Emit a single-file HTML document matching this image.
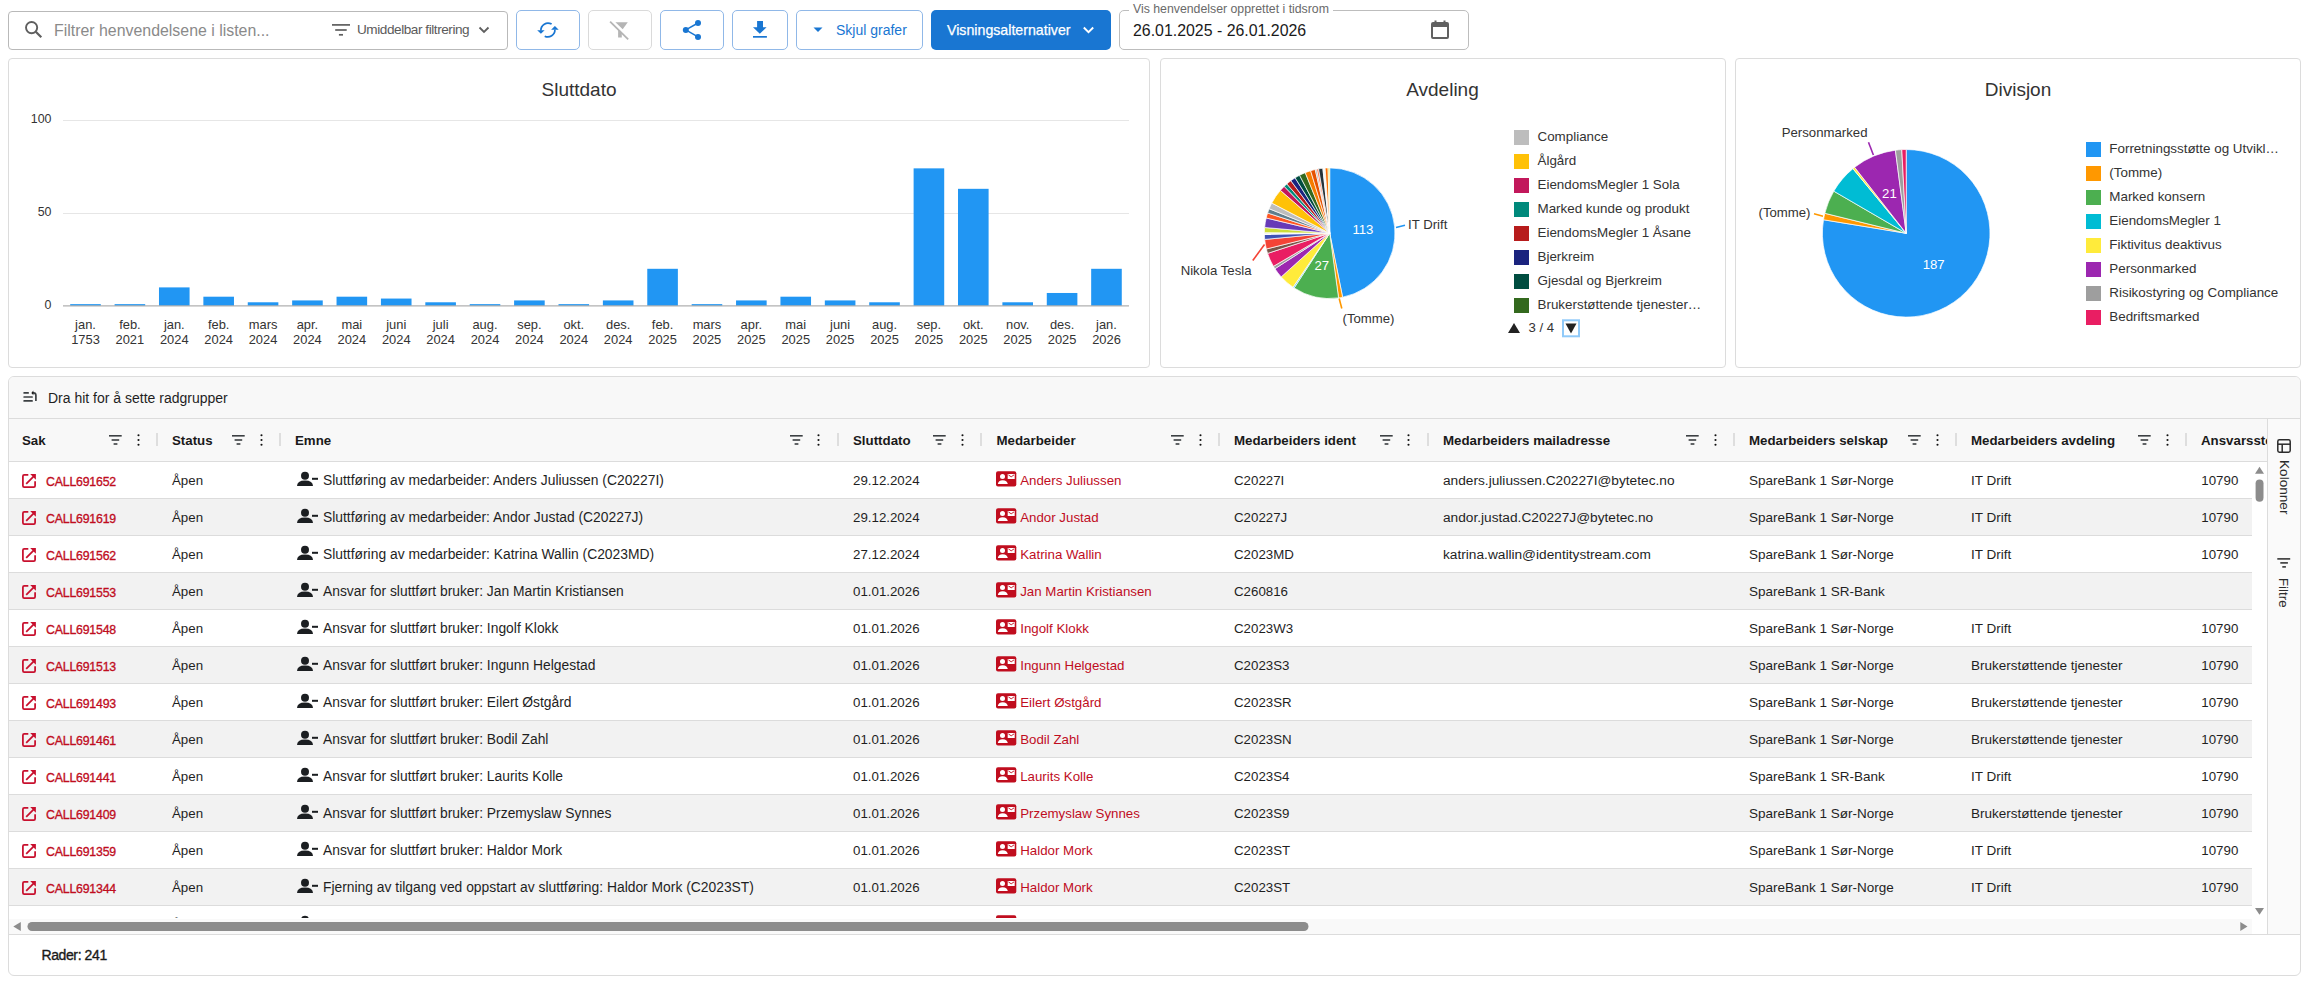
<!DOCTYPE html>
<html><head><meta charset="utf-8">
<style>
*{box-sizing:border-box;margin:0;padding:0}
html,body{width:2308px;height:982px;overflow:hidden;background:#fff;font-family:"Liberation Sans",sans-serif;color:#212121}
.a{position:absolute}
.btn{position:absolute;top:10px;height:40px;border:1px solid #90b8e8;border-radius:5px;background:#fff}
.btn svg{position:absolute}
.card{position:absolute;border:1px solid #dcdcdc;border-radius:4px;background:#fff}
.t{position:absolute;white-space:nowrap}
</style></head><body>

<!-- ============ TOOLBAR ============ -->
<div class="a" style="left:8px;top:11px;width:500px;height:39px;border:1px solid #b9b9b9;border-radius:4px"></div>
<svg class="a" style="left:24px;top:20px" width="20" height="20" viewBox="0 0 20 20"><circle cx="7.6" cy="7.6" r="5.6" fill="none" stroke="#5f5f5f" stroke-width="1.9"/><line x1="11.8" y1="11.8" x2="17.3" y2="17.3" stroke="#5f5f5f" stroke-width="2.2"/></svg>
<div class="t" style="left:54px;top:22px;font-size:15.9px;color:#8a8a8a;line-height:18px">Filtrer henvendelsene i listen...</div>
<svg class="a" style="left:331px;top:23px" width="20" height="14" viewBox="0 0 20 14"><rect x="1" y="1.05" width="18" height="1.7" fill="#5f5f5f"/><rect x="4.2" y="6.15" width="11.5" height="1.7" fill="#5f5f5f"/><rect x="7.9" y="10.95" width="4.1" height="1.7" fill="#5f5f5f"/></svg>
<div class="t" style="left:357px;top:22px;font-size:13.6px;color:#5b5b5b;line-height:16px;letter-spacing:-0.45px">Umiddelbar filtrering</div>
<svg class="a" style="left:478px;top:25px" width="12" height="10" viewBox="0 0 12 10"><polyline points="1.5,2.5 6,7 10.5,2.5" fill="none" stroke="#5f5f5f" stroke-width="1.8"/></svg>

<!-- refresh -->
<div class="btn" style="left:516px;width:64px"></div>
<svg class="a" style="left:530px;top:15px" width="40" height="30" viewBox="0 0 40 30"><g fill="none" stroke="#1976d2" stroke-width="1.75"><path d="M21.6 9.1 A7.1 7.1 0 0 0 10.9 15.6"/><path d="M14.7 21.2 A7.1 7.1 0 0 0 24.9 14.6"/></g><g fill="#1976d2"><path d="M7.2 15.2 L14.6 15.2 L10.9 18.8 Z"/><path d="M21.1 14.8 L28.7 14.8 L24.9 11.1 Z"/></g></svg>
<!-- clear filter (disabled) -->
<div class="btn" style="left:588px;width:64px;border-color:#dadada"></div>
<svg class="a" style="left:605px;top:15px" width="30" height="30" viewBox="0 0 30 30"><g fill="#b5b5b5"><path d="M10.4 7.3 L22.8 7.3 L17.7 14.3 Z"/><path d="M13.1 14.4 L16.8 18.0 L16.8 22.6 L13.1 22.6 Z"/></g><line x1="5.1" y1="6.7" x2="23.2" y2="24.4" stroke="#b5b5b5" stroke-width="1.8"/></svg>
<!-- share -->
<div class="btn" style="left:660px;width:64px"></div>
<svg class="a" style="left:675px;top:15px" width="30" height="30" viewBox="0 0 30 30"><g fill="#1976d2"><circle cx="23" cy="8" r="3"/><circle cx="10.8" cy="14.9" r="3"/><circle cx="23" cy="21.9" r="3"/></g><g stroke="#1976d2" stroke-width="1.5"><line x1="10.8" y1="14.9" x2="23" y2="8"/><line x1="10.8" y1="14.9" x2="23" y2="21.9"/></g></svg>
<!-- download -->
<div class="btn" style="left:732px;width:56px"></div>
<svg class="a" style="left:745px;top:15px" width="30" height="30" viewBox="0 0 30 30"><g fill="#1976d2"><path d="M12.1 6.1 H18 V12.3 H21.6 L14.8 18.8 L8 12.3 H12.1 Z"/><rect x="8" y="21" width="13.9" height="1.7"/></g></svg>
<!-- skjul grafer -->
<div class="btn" style="left:796px;width:127px"></div>
<svg class="a" style="left:812px;top:26px" width="12" height="8" viewBox="0 0 12 8"><path d="M1.5 1.5 L10.5 1.5 L6 6 Z" fill="#1976d2"/></svg>
<div class="t" style="left:836px;top:21px;font-size:14px;color:#1976d2;line-height:18px">Skjul grafer</div>
<!-- visningsalternativer -->
<div class="a" style="left:931px;top:10px;width:180px;height:40px;background:#1976d2;border-radius:5px"></div>
<div class="t" style="left:947px;top:21px;font-size:14.2px;color:#fff;line-height:18px;-webkit-text-stroke:0.25px #fff">Visningsalternativer</div>
<svg class="a" style="left:1082px;top:25px" width="13" height="10" viewBox="0 0 13 10"><polyline points="1.8,2.5 6.5,7.2 11.2,2.5" fill="none" stroke="#fff" stroke-width="1.9"/></svg>
<!-- date range -->
<div class="a" style="left:1119px;top:10px;width:350px;height:40px;border:1px solid #bdbdbd;border-radius:5px"></div>
<div class="t" style="left:1129px;top:2px;padding:0 4px;background:#fff;font-size:12.3px;color:#6a6a6a;line-height:15px">Vis henvendelser opprettet i tidsrom</div>
<div class="t" style="left:1133px;top:22px;font-size:15.9px;color:#1a1a1a;line-height:18px">26.01.2025 - 26.01.2026</div>
<svg class="a" style="left:1430px;top:20px" width="20" height="20" viewBox="0 0 20 20"><rect x="2" y="3" width="16" height="15" rx="1" fill="none" stroke="#616161" stroke-width="2"/><rect x="2" y="3" width="16" height="4" fill="#616161"/><rect x="4.5" y="0.5" width="2" height="3" fill="#616161"/><rect x="13.5" y="0.5" width="2" height="3" fill="#616161"/></svg>

<!-- ============ CHART CARDS ============ -->
<div class="card" style="left:8px;top:58px;width:1142px;height:310px"></div>
<div class="card" style="left:1160px;top:58px;width:566px;height:310px"></div>
<div class="card" style="left:1735px;top:58px;width:566px;height:310px"></div>

<svg class="a" style="left:0;top:0" width="2308" height="370" viewBox="0 0 2308 370" font-family="Liberation Sans, sans-serif">
<text x="579" y="96" font-size="19" fill="#333" text-anchor="middle">Sluttdato</text>
<line x1="63" y1="120.5" x2="1129" y2="120.5" stroke="#e6e6e6" stroke-width="1"/>
<line x1="63" y1="213.5" x2="1129" y2="213.5" stroke="#e6e6e6" stroke-width="1"/>
<text x="51.5" y="123" font-size="12.4" fill="#333" text-anchor="end">100</text>
<text x="51.5" y="216" font-size="12.4" fill="#333" text-anchor="end">50</text>
<text x="51.5" y="309" font-size="12.4" fill="#333" text-anchor="end">0</text>
<rect x="70.20" y="304.14" width="30.6" height="1.86" fill="#2196f3"/>
<text x="85.50" y="328.8" font-size="12.9" fill="#333" text-anchor="middle">jan.</text>
<text x="85.50" y="344" font-size="12.9" fill="#333" text-anchor="middle">1753</text>
<rect x="114.59" y="304.14" width="30.6" height="1.86" fill="#2196f3"/>
<text x="129.89" y="328.8" font-size="12.9" fill="#333" text-anchor="middle">feb.</text>
<text x="129.89" y="344" font-size="12.9" fill="#333" text-anchor="middle">2021</text>
<rect x="158.98" y="287.40" width="30.6" height="18.60" fill="#2196f3"/>
<text x="174.28" y="328.8" font-size="12.9" fill="#333" text-anchor="middle">jan.</text>
<text x="174.28" y="344" font-size="12.9" fill="#333" text-anchor="middle">2024</text>
<rect x="203.37" y="296.70" width="30.6" height="9.30" fill="#2196f3"/>
<text x="218.67" y="328.8" font-size="12.9" fill="#333" text-anchor="middle">feb.</text>
<text x="218.67" y="344" font-size="12.9" fill="#333" text-anchor="middle">2024</text>
<rect x="247.76" y="302.28" width="30.6" height="3.72" fill="#2196f3"/>
<text x="263.06" y="328.8" font-size="12.9" fill="#333" text-anchor="middle">mars</text>
<text x="263.06" y="344" font-size="12.9" fill="#333" text-anchor="middle">2024</text>
<rect x="292.15" y="300.42" width="30.6" height="5.58" fill="#2196f3"/>
<text x="307.45" y="328.8" font-size="12.9" fill="#333" text-anchor="middle">apr.</text>
<text x="307.45" y="344" font-size="12.9" fill="#333" text-anchor="middle">2024</text>
<rect x="336.54" y="296.70" width="30.6" height="9.30" fill="#2196f3"/>
<text x="351.84" y="328.8" font-size="12.9" fill="#333" text-anchor="middle">mai</text>
<text x="351.84" y="344" font-size="12.9" fill="#333" text-anchor="middle">2024</text>
<rect x="380.93" y="298.56" width="30.6" height="7.44" fill="#2196f3"/>
<text x="396.23" y="328.8" font-size="12.9" fill="#333" text-anchor="middle">juni</text>
<text x="396.23" y="344" font-size="12.9" fill="#333" text-anchor="middle">2024</text>
<rect x="425.32" y="302.28" width="30.6" height="3.72" fill="#2196f3"/>
<text x="440.62" y="328.8" font-size="12.9" fill="#333" text-anchor="middle">juli</text>
<text x="440.62" y="344" font-size="12.9" fill="#333" text-anchor="middle">2024</text>
<rect x="469.71" y="304.14" width="30.6" height="1.86" fill="#2196f3"/>
<text x="485.01" y="328.8" font-size="12.9" fill="#333" text-anchor="middle">aug.</text>
<text x="485.01" y="344" font-size="12.9" fill="#333" text-anchor="middle">2024</text>
<rect x="514.10" y="300.42" width="30.6" height="5.58" fill="#2196f3"/>
<text x="529.40" y="328.8" font-size="12.9" fill="#333" text-anchor="middle">sep.</text>
<text x="529.40" y="344" font-size="12.9" fill="#333" text-anchor="middle">2024</text>
<rect x="558.49" y="304.14" width="30.6" height="1.86" fill="#2196f3"/>
<text x="573.79" y="328.8" font-size="12.9" fill="#333" text-anchor="middle">okt.</text>
<text x="573.79" y="344" font-size="12.9" fill="#333" text-anchor="middle">2024</text>
<rect x="602.88" y="300.42" width="30.6" height="5.58" fill="#2196f3"/>
<text x="618.18" y="328.8" font-size="12.9" fill="#333" text-anchor="middle">des.</text>
<text x="618.18" y="344" font-size="12.9" fill="#333" text-anchor="middle">2024</text>
<rect x="647.27" y="268.80" width="30.6" height="37.20" fill="#2196f3"/>
<text x="662.57" y="328.8" font-size="12.9" fill="#333" text-anchor="middle">feb.</text>
<text x="662.57" y="344" font-size="12.9" fill="#333" text-anchor="middle">2025</text>
<rect x="691.66" y="304.14" width="30.6" height="1.86" fill="#2196f3"/>
<text x="706.96" y="328.8" font-size="12.9" fill="#333" text-anchor="middle">mars</text>
<text x="706.96" y="344" font-size="12.9" fill="#333" text-anchor="middle">2025</text>
<rect x="736.05" y="300.42" width="30.6" height="5.58" fill="#2196f3"/>
<text x="751.35" y="328.8" font-size="12.9" fill="#333" text-anchor="middle">apr.</text>
<text x="751.35" y="344" font-size="12.9" fill="#333" text-anchor="middle">2025</text>
<rect x="780.44" y="296.70" width="30.6" height="9.30" fill="#2196f3"/>
<text x="795.74" y="328.8" font-size="12.9" fill="#333" text-anchor="middle">mai</text>
<text x="795.74" y="344" font-size="12.9" fill="#333" text-anchor="middle">2025</text>
<rect x="824.83" y="300.42" width="30.6" height="5.58" fill="#2196f3"/>
<text x="840.13" y="328.8" font-size="12.9" fill="#333" text-anchor="middle">juni</text>
<text x="840.13" y="344" font-size="12.9" fill="#333" text-anchor="middle">2025</text>
<rect x="869.22" y="302.28" width="30.6" height="3.72" fill="#2196f3"/>
<text x="884.52" y="328.8" font-size="12.9" fill="#333" text-anchor="middle">aug.</text>
<text x="884.52" y="344" font-size="12.9" fill="#333" text-anchor="middle">2025</text>
<rect x="913.61" y="168.36" width="30.6" height="137.64" fill="#2196f3"/>
<text x="928.91" y="328.8" font-size="12.9" fill="#333" text-anchor="middle">sep.</text>
<text x="928.91" y="344" font-size="12.9" fill="#333" text-anchor="middle">2025</text>
<rect x="958.00" y="188.82" width="30.6" height="117.18" fill="#2196f3"/>
<text x="973.30" y="328.8" font-size="12.9" fill="#333" text-anchor="middle">okt.</text>
<text x="973.30" y="344" font-size="12.9" fill="#333" text-anchor="middle">2025</text>
<rect x="1002.39" y="302.28" width="30.6" height="3.72" fill="#2196f3"/>
<text x="1017.69" y="328.8" font-size="12.9" fill="#333" text-anchor="middle">nov.</text>
<text x="1017.69" y="344" font-size="12.9" fill="#333" text-anchor="middle">2025</text>
<rect x="1046.78" y="292.98" width="30.6" height="13.02" fill="#2196f3"/>
<text x="1062.08" y="328.8" font-size="12.9" fill="#333" text-anchor="middle">des.</text>
<text x="1062.08" y="344" font-size="12.9" fill="#333" text-anchor="middle">2025</text>
<rect x="1091.17" y="268.80" width="30.6" height="37.20" fill="#2196f3"/>
<text x="1106.47" y="328.8" font-size="12.9" fill="#333" text-anchor="middle">jan.</text>
<text x="1106.47" y="344" font-size="12.9" fill="#333" text-anchor="middle">2026</text>
<line x1="63" y1="305.8" x2="1129" y2="305.8" stroke="#b0b0b0" stroke-width="1.2"/>
<text x="1442.5" y="96" font-size="19" fill="#333" text-anchor="middle">Avdeling</text>
<path d="M1329.70,233.20 L1329.70,167.90 A65.3,65.3 0 0 1 1342.61,297.21 Z" fill="#2196f3" stroke="#fff" stroke-width="0.7" stroke-linejoin="round"/>
<path d="M1329.70,233.20 L1342.61,297.21 A65.3,65.3 0 0 1 1338.56,297.90 Z" fill="#ff9800" stroke="#fff" stroke-width="0.7" stroke-linejoin="round"/>
<path d="M1329.70,233.20 L1338.56,297.90 A65.3,65.3 0 0 1 1294.14,287.97 Z" fill="#4caf50" stroke="#fff" stroke-width="0.7" stroke-linejoin="round"/>
<path d="M1329.70,233.20 L1294.14,287.97 A65.3,65.3 0 0 1 1293.00,287.21 Z" fill="#4fc3f7" stroke="#fff" stroke-width="0.7" stroke-linejoin="round"/>
<path d="M1329.70,233.20 L1293.00,287.21 A65.3,65.3 0 0 1 1281.17,276.89 Z" fill="#ffeb3b" stroke="#fff" stroke-width="0.7" stroke-linejoin="round"/>
<path d="M1329.70,233.20 L1281.17,276.89 A65.3,65.3 0 0 1 1274.93,268.76 Z" fill="#9c27b0" stroke="#fff" stroke-width="0.7" stroke-linejoin="round"/>
<path d="M1329.70,233.20 L1274.93,268.76 A65.3,65.3 0 0 1 1273.44,266.34 Z" fill="#9e9e9e" stroke="#fff" stroke-width="0.7" stroke-linejoin="round"/>
<path d="M1329.70,233.20 L1273.44,266.34 A65.3,65.3 0 0 1 1267.60,253.38 Z" fill="#e91e63" stroke="#fff" stroke-width="0.7" stroke-linejoin="round"/>
<path d="M1329.70,233.20 L1267.60,253.38 A65.3,65.3 0 0 1 1266.34,249.00 Z" fill="#795548" stroke="#fff" stroke-width="0.7" stroke-linejoin="round"/>
<path d="M1329.70,233.20 L1266.34,249.00 A65.3,65.3 0 0 1 1264.70,239.46 Z" fill="#f44336" stroke="#fff" stroke-width="0.7" stroke-linejoin="round"/>
<path d="M1329.70,233.20 L1264.70,239.46 A65.3,65.3 0 0 1 1264.41,234.34 Z" fill="#3f51b5" stroke="#fff" stroke-width="0.7" stroke-linejoin="round"/>
<path d="M1329.70,233.20 L1264.41,234.34 A65.3,65.3 0 0 1 1264.40,232.63 Z" fill="#eeeeee" stroke="#fff" stroke-width="0.7" stroke-linejoin="round"/>
<path d="M1329.70,233.20 L1264.40,232.63 A65.3,65.3 0 0 1 1264.65,227.51 Z" fill="#cddc39" stroke="#fff" stroke-width="0.7" stroke-linejoin="round"/>
<path d="M1329.70,233.20 L1264.65,227.51 A65.3,65.3 0 0 1 1266.20,217.96 Z" fill="#673ab7" stroke="#fff" stroke-width="0.7" stroke-linejoin="round"/>
<path d="M1329.70,233.20 L1266.20,217.96 A65.3,65.3 0 0 1 1267.60,213.02 Z" fill="#ff5722" stroke="#fff" stroke-width="0.7" stroke-linejoin="round"/>
<path d="M1329.70,233.20 L1267.60,213.02 A65.3,65.3 0 0 1 1269.15,208.74 Z" fill="#607d8b" stroke="#fff" stroke-width="0.7" stroke-linejoin="round"/>
<path d="M1329.70,233.20 L1269.15,208.74 A65.3,65.3 0 0 1 1271.78,203.05 Z" fill="#bdbdbd" stroke="#fff" stroke-width="0.7" stroke-linejoin="round"/>
<path d="M1329.70,233.20 L1271.78,203.05 A65.3,65.3 0 0 1 1280.42,190.36 Z" fill="#ffc107" stroke="#fff" stroke-width="0.7" stroke-linejoin="round"/>
<path d="M1329.70,233.20 L1280.42,190.36 A65.3,65.3 0 0 1 1284.18,186.39 Z" fill="#c2185b" stroke="#fff" stroke-width="0.7" stroke-linejoin="round"/>
<path d="M1329.70,233.20 L1284.18,186.39 A65.3,65.3 0 0 1 1286.86,183.92 Z" fill="#00897b" stroke="#fff" stroke-width="0.7" stroke-linejoin="round"/>
<path d="M1329.70,233.20 L1286.86,183.92 A65.3,65.3 0 0 1 1290.86,180.71 Z" fill="#b71c1c" stroke="#fff" stroke-width="0.7" stroke-linejoin="round"/>
<path d="M1329.70,233.20 L1290.86,180.71 A65.3,65.3 0 0 1 1295.10,177.82 Z" fill="#1a237e" stroke="#fff" stroke-width="0.7" stroke-linejoin="round"/>
<path d="M1329.70,233.20 L1295.10,177.82 A65.3,65.3 0 0 1 1299.55,175.28 Z" fill="#004d40" stroke="#fff" stroke-width="0.7" stroke-linejoin="round"/>
<path d="M1329.70,233.20 L1299.55,175.28 A65.3,65.3 0 0 1 1305.24,172.65 Z" fill="#33691e" stroke="#fff" stroke-width="0.7" stroke-linejoin="round"/>
<path d="M1329.70,233.20 L1305.24,172.65 A65.3,65.3 0 0 1 1310.61,170.75 Z" fill="#f57c00" stroke="#fff" stroke-width="0.7" stroke-linejoin="round"/>
<path d="M1329.70,233.20 L1310.61,170.75 A65.3,65.3 0 0 1 1315.23,169.52 Z" fill="#e65100" stroke="#fff" stroke-width="0.7" stroke-linejoin="round"/>
<path d="M1329.70,233.20 L1315.23,169.52 A65.3,65.3 0 0 1 1316.68,169.21 Z" fill="#9e9e9e" stroke="#fff" stroke-width="0.7" stroke-linejoin="round"/>
<path d="M1329.70,233.20 L1316.68,169.21 A65.3,65.3 0 0 1 1318.59,168.85 Z" fill="#ff7043" stroke="#fff" stroke-width="0.7" stroke-linejoin="round"/>
<path d="M1329.70,233.20 L1318.59,168.85 A65.3,65.3 0 0 1 1322.87,168.26 Z" fill="#263238" stroke="#fff" stroke-width="0.7" stroke-linejoin="round"/>
<path d="M1329.70,233.20 L1322.87,168.26 A65.3,65.3 0 0 1 1325.14,168.06 Z" fill="#f5f5f5" stroke="#fff" stroke-width="0.7" stroke-linejoin="round"/>
<path d="M1329.70,233.20 L1325.14,168.06 A65.3,65.3 0 0 1 1328.10,167.92 Z" fill="#ff6f00" stroke="#fff" stroke-width="0.7" stroke-linejoin="round"/>
<path d="M1329.70,233.20 L1328.10,167.92 A65.3,65.3 0 0 1 1329.70,167.90 Z" fill="#d4e157" stroke="#fff" stroke-width="0.7" stroke-linejoin="round"/>
<text x="1362.9" y="234.3" font-size="13.2" fill="#fff" text-anchor="middle">113</text>
<text x="1321.8" y="269.6" font-size="13.2" fill="#fff" text-anchor="middle">27</text>
<line x1="1396" y1="227.5" x2="1405" y2="225.2" stroke="#2196f3" stroke-width="1.6"/>
<text x="1408" y="229" font-size="13.2" fill="#333">IT Drift</text>
<line x1="1264.5" y1="244.5" x2="1252.8" y2="260.5" stroke="#f44336" stroke-width="1.6"/>
<text x="1251.5" y="275" font-size="13.2" fill="#333" text-anchor="end">Nikola Tesla</text>
<line x1="1339.2" y1="298.5" x2="1341.8" y2="308.5" stroke="#ff9800" stroke-width="1.6"/>
<text x="1342.5" y="323" font-size="13.2" fill="#333">(Tomme)</text>
<rect x="1514" y="130" width="15" height="15" fill="#bdbdbd"/>
<text x="1537.5" y="140.7" font-size="13.4" fill="#333">Compliance</text>
<rect x="1514" y="154" width="15" height="15" fill="#ffc107"/>
<text x="1537.5" y="164.7" font-size="13.4" fill="#333">Ålgård</text>
<rect x="1514" y="178" width="15" height="15" fill="#c2185b"/>
<text x="1537.5" y="188.7" font-size="13.4" fill="#333">EiendomsMegler 1 Sola</text>
<rect x="1514" y="202" width="15" height="15" fill="#00897b"/>
<text x="1537.5" y="212.7" font-size="13.4" fill="#333">Marked kunde og produkt</text>
<rect x="1514" y="226" width="15" height="15" fill="#b71c1c"/>
<text x="1537.5" y="236.7" font-size="13.4" fill="#333">EiendomsMegler 1 Åsane</text>
<rect x="1514" y="250" width="15" height="15" fill="#1a237e"/>
<text x="1537.5" y="260.7" font-size="13.4" fill="#333">Bjerkreim</text>
<rect x="1514" y="274" width="15" height="15" fill="#004d40"/>
<text x="1537.5" y="284.7" font-size="13.4" fill="#333">Gjesdal og Bjerkreim</text>
<rect x="1514" y="298" width="15" height="15" fill="#33691e"/>
<text x="1537.5" y="308.7" font-size="13.4" fill="#333">Brukerstøttende tjenester…</text>
<path d="M1508,333 L1514,323 L1520,333 Z" fill="#222"/>
<text x="1528.5" y="332" font-size="13.2" fill="#333">3 / 4</text>
<rect x="1563" y="320.3" width="16" height="16" fill="none" stroke="#90caf9" stroke-width="2"/>
<path d="M1565.5,323.5 L1576.5,323.5 L1571,333.5 Z" fill="#222"/>
<text x="2018" y="96" font-size="19" fill="#333" text-anchor="middle">Divisjon</text>
<path d="M1906.20,233.30 L1906.20,149.50 A83.8,83.8 0 1 1 1823.50,219.76 Z" fill="#2196f3" stroke="#fff" stroke-width="0.7" stroke-linejoin="round"/>
<path d="M1906.20,233.30 L1823.50,219.76 A83.8,83.8 0 0 1 1824.82,213.31 Z" fill="#ff9800" stroke="#fff" stroke-width="0.7" stroke-linejoin="round"/>
<path d="M1906.20,233.30 L1824.82,213.31 A83.8,83.8 0 0 1 1833.77,191.15 Z" fill="#4caf50" stroke="#fff" stroke-width="0.7" stroke-linejoin="round"/>
<path d="M1906.20,233.30 L1833.77,191.15 A83.8,83.8 0 0 1 1852.90,168.64 Z" fill="#00bcd4" stroke="#fff" stroke-width="0.7" stroke-linejoin="round"/>
<path d="M1906.20,233.30 L1852.90,168.64 A83.8,83.8 0 0 1 1854.61,167.26 Z" fill="#ffeb3b" stroke="#fff" stroke-width="0.7" stroke-linejoin="round"/>
<path d="M1906.20,233.30 L1854.61,167.26 A83.8,83.8 0 0 1 1895.41,150.20 Z" fill="#9c27b0" stroke="#fff" stroke-width="0.7" stroke-linejoin="round"/>
<path d="M1906.20,233.30 L1895.41,150.20 A83.8,83.8 0 0 1 1901.81,149.61 Z" fill="#9e9e9e" stroke="#fff" stroke-width="0.7" stroke-linejoin="round"/>
<path d="M1906.20,233.30 L1901.81,149.61 A83.8,83.8 0 0 1 1906.20,149.50 Z" fill="#e91e63" stroke="#fff" stroke-width="0.7" stroke-linejoin="round"/>
<text x="1933.7" y="268.8" font-size="13.2" fill="#fff" text-anchor="middle">187</text>
<text x="1889.4" y="198.2" font-size="13.2" fill="#fff" text-anchor="middle">21</text>
<line x1="1873.4" y1="155" x2="1868.5" y2="142.2" stroke="#9c27b0" stroke-width="1.6"/>
<text x="1867.5" y="137" font-size="13.2" fill="#333" text-anchor="end">Personmarked</text>
<line x1="1823" y1="216.3" x2="1814" y2="213.8" stroke="#ff9800" stroke-width="1.6"/>
<text x="1810.5" y="217" font-size="13.2" fill="#333" text-anchor="end">(Tomme)</text>
<rect x="2086" y="142" width="15" height="15" fill="#2196f3"/>
<text x="2109.3" y="152.7" font-size="13.4" fill="#333">Forretningsstøtte og Utvikl…</text>
<rect x="2086" y="166" width="15" height="15" fill="#ff9800"/>
<text x="2109.3" y="176.7" font-size="13.4" fill="#333">(Tomme)</text>
<rect x="2086" y="190" width="15" height="15" fill="#4caf50"/>
<text x="2109.3" y="200.7" font-size="13.4" fill="#333">Marked konsern</text>
<rect x="2086" y="214" width="15" height="15" fill="#00bcd4"/>
<text x="2109.3" y="224.7" font-size="13.4" fill="#333">EiendomsMegler 1</text>
<rect x="2086" y="238" width="15" height="15" fill="#ffeb3b"/>
<text x="2109.3" y="248.7" font-size="13.4" fill="#333">Fiktivitus deaktivus</text>
<rect x="2086" y="262" width="15" height="15" fill="#9c27b0"/>
<text x="2109.3" y="272.7" font-size="13.4" fill="#333">Personmarked</text>
<rect x="2086" y="286" width="15" height="15" fill="#9e9e9e"/>
<text x="2109.3" y="296.7" font-size="13.4" fill="#333">Risikostyring og Compliance</text>
<rect x="2086" y="310" width="15" height="15" fill="#e91e63"/>
<text x="2109.3" y="320.7" font-size="13.4" fill="#333">Bedriftsmarked</text>
</svg>

<!-- ============ TABLE ============ -->
<div class="card" style="left:8px;top:376px;width:2293px;height:600px;border-radius:6px"></div>

<div class="a" style="left:9px;top:377px;width:2291px;height:41px;background:#f8f8f8;border-radius:5px 5px 0 0"></div>
<div class="a" style="left:9px;top:418px;width:2291px;height:1px;background:#dcdcdc"></div>
<svg class="a" style="left:20px;top:388px" width="20" height="16" viewBox="0 0 20 16"><g fill="#3c4043"><rect x="3.4" y="4.1" width="5.5" height="1.6" rx=".5"/><rect x="3.4" y="8.2" width="9.4" height="1.6" rx=".5"/><rect x="3.4" y="12.1" width="9.4" height="1.6" rx=".5"/></g><path d="M15.9 13 V7.5 Q15.9 4.9 13.5 4.9 H12.6" fill="none" stroke="#3c4043" stroke-width="1.7"/><path d="M11.3 4.9 L13.4 2.6 L13.4 7.2 Z" fill="#1a1a1a"/></svg>
<div class="t" style="left:48px;top:390.75px;font-size:14.0px;line-height:1;color:#1f1f1f;font-weight:normal;letter-spacing:0px;">Dra hit for å sette radgrupper</div>
<div class="a" style="left:9px;top:419px;width:2258px;height:42px;background:#f8f8f8"></div>
<div class="a" style="left:9px;top:461px;width:2258px;height:1px;background:#dcdcdc"></div>
<div class="a" style="left:2267px;top:419px;width:1px;height:516px;background:#dcdcdc"></div>
<div class="a" style="left:2268px;top:419px;width:32px;height:515px;background:#fafafa"></div>
<div class="t" style="left:22px;top:433.84px;font-size:13.3px;line-height:1;color:#1a1a1a;font-weight:bold;letter-spacing:0px;">Sak</div>
<svg class="a" style="left:109.0px;top:434px" width="14" height="11" viewBox="0 0 14 11"><g fill="#3c4043"><rect x="0" y="1" width="12.7" height="1.6"/><rect x="2.6" y="5.2" width="7.6" height="1.6"/><rect x="4.6" y="9.2" width="3.8" height="1.6"/></g></svg>
<svg class="a" style="left:136.5px;top:433px" width="3" height="13" viewBox="0 0 3 13"><g fill="#111"><circle cx="1.5" cy="2.2" r="1.05"/><circle cx="1.5" cy="7" r="1.05"/><circle cx="1.5" cy="11.7" r="1.05"/></g></svg>
<div class="a" style="left:156.25px;top:433px;width:1.5px;height:13px;background:#dedede"></div>
<div class="t" style="left:172px;top:433.84px;font-size:13.3px;line-height:1;color:#1a1a1a;font-weight:bold;letter-spacing:0px;">Status</div>
<svg class="a" style="left:231.9px;top:434px" width="14" height="11" viewBox="0 0 14 11"><g fill="#3c4043"><rect x="0" y="1" width="12.7" height="1.6"/><rect x="2.6" y="5.2" width="7.6" height="1.6"/><rect x="4.6" y="9.2" width="3.8" height="1.6"/></g></svg>
<svg class="a" style="left:259.5px;top:433px" width="3" height="13" viewBox="0 0 3 13"><g fill="#111"><circle cx="1.5" cy="2.2" r="1.05"/><circle cx="1.5" cy="7" r="1.05"/><circle cx="1.5" cy="11.7" r="1.05"/></g></svg>
<div class="a" style="left:279.25px;top:433px;width:1.5px;height:13px;background:#dedede"></div>
<div class="t" style="left:295px;top:433.84px;font-size:13.3px;line-height:1;color:#1a1a1a;font-weight:bold;letter-spacing:0px;">Emne</div>
<svg class="a" style="left:790.1px;top:434px" width="14" height="11" viewBox="0 0 14 11"><g fill="#3c4043"><rect x="0" y="1" width="12.7" height="1.6"/><rect x="2.6" y="5.2" width="7.6" height="1.6"/><rect x="4.6" y="9.2" width="3.8" height="1.6"/></g></svg>
<svg class="a" style="left:817.1px;top:433px" width="3" height="13" viewBox="0 0 3 13"><g fill="#111"><circle cx="1.5" cy="2.2" r="1.05"/><circle cx="1.5" cy="7" r="1.05"/><circle cx="1.5" cy="11.7" r="1.05"/></g></svg>
<div class="a" style="left:837.25px;top:433px;width:1.5px;height:13px;background:#dedede"></div>
<div class="t" style="left:853px;top:433.84px;font-size:13.3px;line-height:1;color:#1a1a1a;font-weight:bold;letter-spacing:0px;">Sluttdato</div>
<svg class="a" style="left:933.1px;top:434px" width="14" height="11" viewBox="0 0 14 11"><g fill="#3c4043"><rect x="0" y="1" width="12.7" height="1.6"/><rect x="2.6" y="5.2" width="7.6" height="1.6"/><rect x="4.6" y="9.2" width="3.8" height="1.6"/></g></svg>
<svg class="a" style="left:960.5px;top:433px" width="3" height="13" viewBox="0 0 3 13"><g fill="#111"><circle cx="1.5" cy="2.2" r="1.05"/><circle cx="1.5" cy="7" r="1.05"/><circle cx="1.5" cy="11.7" r="1.05"/></g></svg>
<div class="a" style="left:980.25px;top:433px;width:1.5px;height:13px;background:#dedede"></div>
<div class="t" style="left:996.5px;top:433.84px;font-size:13.3px;line-height:1;color:#1a1a1a;font-weight:bold;letter-spacing:0px;">Medarbeider</div>
<svg class="a" style="left:1170.7px;top:434px" width="14" height="11" viewBox="0 0 14 11"><g fill="#3c4043"><rect x="0" y="1" width="12.7" height="1.6"/><rect x="2.6" y="5.2" width="7.6" height="1.6"/><rect x="4.6" y="9.2" width="3.8" height="1.6"/></g></svg>
<svg class="a" style="left:1198.5px;top:433px" width="3" height="13" viewBox="0 0 3 13"><g fill="#111"><circle cx="1.5" cy="2.2" r="1.05"/><circle cx="1.5" cy="7" r="1.05"/><circle cx="1.5" cy="11.7" r="1.05"/></g></svg>
<div class="a" style="left:1218.25px;top:433px;width:1.5px;height:13px;background:#dedede"></div>
<div class="t" style="left:1234px;top:433.84px;font-size:13.3px;line-height:1;color:#1a1a1a;font-weight:bold;letter-spacing:0px;">Medarbeiders ident</div>
<svg class="a" style="left:1379.5px;top:434px" width="14" height="11" viewBox="0 0 14 11"><g fill="#3c4043"><rect x="0" y="1" width="12.7" height="1.6"/><rect x="2.6" y="5.2" width="7.6" height="1.6"/><rect x="4.6" y="9.2" width="3.8" height="1.6"/></g></svg>
<svg class="a" style="left:1407.0px;top:433px" width="3" height="13" viewBox="0 0 3 13"><g fill="#111"><circle cx="1.5" cy="2.2" r="1.05"/><circle cx="1.5" cy="7" r="1.05"/><circle cx="1.5" cy="11.7" r="1.05"/></g></svg>
<div class="a" style="left:1427.25px;top:433px;width:1.5px;height:13px;background:#dedede"></div>
<div class="t" style="left:1443px;top:433.84px;font-size:13.3px;line-height:1;color:#1a1a1a;font-weight:bold;letter-spacing:0px;">Medarbeiders mailadresse</div>
<svg class="a" style="left:1685.9px;top:434px" width="14" height="11" viewBox="0 0 14 11"><g fill="#3c4043"><rect x="0" y="1" width="12.7" height="1.6"/><rect x="2.6" y="5.2" width="7.6" height="1.6"/><rect x="4.6" y="9.2" width="3.8" height="1.6"/></g></svg>
<svg class="a" style="left:1713.5px;top:433px" width="3" height="13" viewBox="0 0 3 13"><g fill="#111"><circle cx="1.5" cy="2.2" r="1.05"/><circle cx="1.5" cy="7" r="1.05"/><circle cx="1.5" cy="11.7" r="1.05"/></g></svg>
<div class="a" style="left:1733.25px;top:433px;width:1.5px;height:13px;background:#dedede"></div>
<div class="t" style="left:1749px;top:433.84px;font-size:13.3px;line-height:1;color:#1a1a1a;font-weight:bold;letter-spacing:0px;">Medarbeiders selskap</div>
<svg class="a" style="left:1908.1px;top:434px" width="14" height="11" viewBox="0 0 14 11"><g fill="#3c4043"><rect x="0" y="1" width="12.7" height="1.6"/><rect x="2.6" y="5.2" width="7.6" height="1.6"/><rect x="4.6" y="9.2" width="3.8" height="1.6"/></g></svg>
<svg class="a" style="left:1935.5px;top:433px" width="3" height="13" viewBox="0 0 3 13"><g fill="#111"><circle cx="1.5" cy="2.2" r="1.05"/><circle cx="1.5" cy="7" r="1.05"/><circle cx="1.5" cy="11.7" r="1.05"/></g></svg>
<div class="a" style="left:1955.25px;top:433px;width:1.5px;height:13px;background:#dedede"></div>
<div class="t" style="left:1971px;top:433.84px;font-size:13.3px;line-height:1;color:#1a1a1a;font-weight:bold;letter-spacing:0px;">Medarbeiders avdeling</div>
<svg class="a" style="left:2138.1px;top:434px" width="14" height="11" viewBox="0 0 14 11"><g fill="#3c4043"><rect x="0" y="1" width="12.7" height="1.6"/><rect x="2.6" y="5.2" width="7.6" height="1.6"/><rect x="4.6" y="9.2" width="3.8" height="1.6"/></g></svg>
<svg class="a" style="left:2165.5px;top:433px" width="3" height="13" viewBox="0 0 3 13"><g fill="#111"><circle cx="1.5" cy="2.2" r="1.05"/><circle cx="1.5" cy="7" r="1.05"/><circle cx="1.5" cy="11.7" r="1.05"/></g></svg>
<div class="a" style="left:2185.25px;top:433px;width:1.5px;height:13px;background:#dedede"></div>
<div class="a" style="left:2190px;top:419px;width:77px;height:42px;overflow:hidden">
<div class="t" style="left:11px;top:14.84px;font-size:13.3px;line-height:1;color:#1a1a1a;font-weight:bold">Ansvarssted</div></div>
<div class="a" style="left:9px;top:462px;width:2243px;height:456px;overflow:hidden">
<div class="a" style="left:0;top:0px;width:2243px;height:36px;background:#ffffff"></div>
<div class="a" style="left:0;top:36px;width:2243px;height:1px;background:#dcdcdc"></div>
<svg class="a" style="left:12px;top:11px" width="16" height="16" viewBox="0 0 16 16"><path d="M7.3 1.9 H3.2 Q1.9 1.9 1.9 3.2 V12.8 Q1.9 14.1 3.2 14.1 H12.8 Q14.1 14.1 14.1 12.8 V8.3" fill="none" stroke="#c8102e" stroke-width="1.75"/><path d="M9.2 1.1 H14.9 V6.8 Z" fill="#c8102e"/><line x1="5.2" y1="10.8" x2="13.2" y2="2.8" stroke="#c8102e" stroke-width="1.75"/></svg>
<div class="t" style="left:37px;top:12.96px;font-size:13.1px;line-height:1;color:#c00d1e;font-weight:normal;letter-spacing:-0.2px;-webkit-text-stroke:0.35px #c00d1e;transform:scaleX(0.94);transform-origin:0 0">CALL691652</div>
<div class="t" style="left:163px;top:11.59px;font-size:13.3px;line-height:1;color:#1f1f1f;font-weight:normal;letter-spacing:0px;">Åpen</div>
<svg class="a" style="left:288px;top:9px" width="24" height="16" viewBox="0 0 24 16"><g fill="#1b1e21"><circle cx="8" cy="4.8" r="4"/><path d="M0 15 Q0 9.4 8 9.4 Q16 9.4 16 15 Z"/><rect x="15" y="6.8" width="6" height="2"/></g></svg>
<div class="t" style="left:314px;top:11.93px;font-size:13.85px;line-height:1;color:#1f1f1f;font-weight:normal;letter-spacing:0px;">Sluttføring av medarbeider: Anders Juliussen (C20227I)</div>
<div class="t" style="left:844px;top:11.59px;font-size:13.3px;line-height:1;color:#1f1f1f;font-weight:normal;letter-spacing:0px;">29.12.2024</div>
<svg class="a" style="left:987px;top:9.300000000000011px" width="22" height="17" viewBox="0 0 22 17"><rect x="0" y="0.3" width="20.3" height="15.2" rx="2" fill="#c00d1e"/><circle cx="6.5" cy="5.5" r="2.5" fill="#fff"/><path d="M1.8 13.1 Q2.3 9.2 6.7 9.2 Q11.1 9.2 11.8 13.1 Z" fill="#fff"/><rect x="11.7" y="3" width="7" height="5" fill="#fff"/><polyline points="12.4,3.9 15.2,5.8 18,3.9" fill="none" stroke="#c00d1e" stroke-width="0.9"/></svg>
<div class="t" style="left:1011.2px;top:11.59px;font-size:13.3px;line-height:1;color:#c00d1e;font-weight:normal;letter-spacing:0px;">Anders Juliussen</div>
<div class="t" style="left:1225px;top:11.59px;font-size:13.3px;line-height:1;color:#1f1f1f;font-weight:normal;letter-spacing:0px;">C20227I</div>
<div class="t" style="left:1434px;top:11.85px;font-size:13.7px;line-height:1;color:#1f1f1f;font-weight:normal;letter-spacing:0px;">anders.juliussen.C20227I@bytetec.no</div>
<div class="t" style="left:1740px;top:12.02px;font-size:13.5px;line-height:1;color:#1f1f1f;font-weight:normal;letter-spacing:0px;">SpareBank 1 Sør-Norge</div>
<div class="t" style="left:1962px;top:12.02px;font-size:13.5px;line-height:1;color:#1f1f1f;font-weight:normal;letter-spacing:0px;">IT Drift</div>
<div class="t" style="left:2192.3px;top:11.59px;font-size:13.3px;line-height:1;color:#1f1f1f;font-weight:normal;letter-spacing:0px;">10790</div>
<div class="a" style="left:0;top:37px;width:2243px;height:36px;background:#f2f2f2"></div>
<div class="a" style="left:0;top:73px;width:2243px;height:1px;background:#dcdcdc"></div>
<svg class="a" style="left:12px;top:48px" width="16" height="16" viewBox="0 0 16 16"><path d="M7.3 1.9 H3.2 Q1.9 1.9 1.9 3.2 V12.8 Q1.9 14.1 3.2 14.1 H12.8 Q14.1 14.1 14.1 12.8 V8.3" fill="none" stroke="#c8102e" stroke-width="1.75"/><path d="M9.2 1.1 H14.9 V6.8 Z" fill="#c8102e"/><line x1="5.2" y1="10.8" x2="13.2" y2="2.8" stroke="#c8102e" stroke-width="1.75"/></svg>
<div class="t" style="left:37px;top:49.96px;font-size:13.1px;line-height:1;color:#c00d1e;font-weight:normal;letter-spacing:-0.2px;-webkit-text-stroke:0.35px #c00d1e;transform:scaleX(0.94);transform-origin:0 0">CALL691619</div>
<div class="t" style="left:163px;top:48.59px;font-size:13.3px;line-height:1;color:#1f1f1f;font-weight:normal;letter-spacing:0px;">Åpen</div>
<svg class="a" style="left:288px;top:46px" width="24" height="16" viewBox="0 0 24 16"><g fill="#1b1e21"><circle cx="8" cy="4.8" r="4"/><path d="M0 15 Q0 9.4 8 9.4 Q16 9.4 16 15 Z"/><rect x="15" y="6.8" width="6" height="2"/></g></svg>
<div class="t" style="left:314px;top:48.93px;font-size:13.85px;line-height:1;color:#1f1f1f;font-weight:normal;letter-spacing:0px;">Sluttføring av medarbeider: Andor Justad (C20227J)</div>
<div class="t" style="left:844px;top:48.59px;font-size:13.3px;line-height:1;color:#1f1f1f;font-weight:normal;letter-spacing:0px;">29.12.2024</div>
<svg class="a" style="left:987px;top:46.30000000000001px" width="22" height="17" viewBox="0 0 22 17"><rect x="0" y="0.3" width="20.3" height="15.2" rx="2" fill="#c00d1e"/><circle cx="6.5" cy="5.5" r="2.5" fill="#fff"/><path d="M1.8 13.1 Q2.3 9.2 6.7 9.2 Q11.1 9.2 11.8 13.1 Z" fill="#fff"/><rect x="11.7" y="3" width="7" height="5" fill="#fff"/><polyline points="12.4,3.9 15.2,5.8 18,3.9" fill="none" stroke="#c00d1e" stroke-width="0.9"/></svg>
<div class="t" style="left:1011.2px;top:48.59px;font-size:13.3px;line-height:1;color:#c00d1e;font-weight:normal;letter-spacing:0px;">Andor Justad</div>
<div class="t" style="left:1225px;top:48.59px;font-size:13.3px;line-height:1;color:#1f1f1f;font-weight:normal;letter-spacing:0px;">C20227J</div>
<div class="t" style="left:1434px;top:48.85px;font-size:13.7px;line-height:1;color:#1f1f1f;font-weight:normal;letter-spacing:0px;">andor.justad.C20227J@bytetec.no</div>
<div class="t" style="left:1740px;top:49.02px;font-size:13.5px;line-height:1;color:#1f1f1f;font-weight:normal;letter-spacing:0px;">SpareBank 1 Sør-Norge</div>
<div class="t" style="left:1962px;top:49.02px;font-size:13.5px;line-height:1;color:#1f1f1f;font-weight:normal;letter-spacing:0px;">IT Drift</div>
<div class="t" style="left:2192.3px;top:48.59px;font-size:13.3px;line-height:1;color:#1f1f1f;font-weight:normal;letter-spacing:0px;">10790</div>
<div class="a" style="left:0;top:74px;width:2243px;height:36px;background:#ffffff"></div>
<div class="a" style="left:0;top:110px;width:2243px;height:1px;background:#dcdcdc"></div>
<svg class="a" style="left:12px;top:85px" width="16" height="16" viewBox="0 0 16 16"><path d="M7.3 1.9 H3.2 Q1.9 1.9 1.9 3.2 V12.8 Q1.9 14.1 3.2 14.1 H12.8 Q14.1 14.1 14.1 12.8 V8.3" fill="none" stroke="#c8102e" stroke-width="1.75"/><path d="M9.2 1.1 H14.9 V6.8 Z" fill="#c8102e"/><line x1="5.2" y1="10.8" x2="13.2" y2="2.8" stroke="#c8102e" stroke-width="1.75"/></svg>
<div class="t" style="left:37px;top:86.96px;font-size:13.1px;line-height:1;color:#c00d1e;font-weight:normal;letter-spacing:-0.2px;-webkit-text-stroke:0.35px #c00d1e;transform:scaleX(0.94);transform-origin:0 0">CALL691562</div>
<div class="t" style="left:163px;top:85.59px;font-size:13.3px;line-height:1;color:#1f1f1f;font-weight:normal;letter-spacing:0px;">Åpen</div>
<svg class="a" style="left:288px;top:83px" width="24" height="16" viewBox="0 0 24 16"><g fill="#1b1e21"><circle cx="8" cy="4.8" r="4"/><path d="M0 15 Q0 9.4 8 9.4 Q16 9.4 16 15 Z"/><rect x="15" y="6.8" width="6" height="2"/></g></svg>
<div class="t" style="left:314px;top:85.93px;font-size:13.85px;line-height:1;color:#1f1f1f;font-weight:normal;letter-spacing:0px;">Sluttføring av medarbeider: Katrina Wallin (C2023MD)</div>
<div class="t" style="left:844px;top:85.59px;font-size:13.3px;line-height:1;color:#1f1f1f;font-weight:normal;letter-spacing:0px;">27.12.2024</div>
<svg class="a" style="left:987px;top:83.29999999999995px" width="22" height="17" viewBox="0 0 22 17"><rect x="0" y="0.3" width="20.3" height="15.2" rx="2" fill="#c00d1e"/><circle cx="6.5" cy="5.5" r="2.5" fill="#fff"/><path d="M1.8 13.1 Q2.3 9.2 6.7 9.2 Q11.1 9.2 11.8 13.1 Z" fill="#fff"/><rect x="11.7" y="3" width="7" height="5" fill="#fff"/><polyline points="12.4,3.9 15.2,5.8 18,3.9" fill="none" stroke="#c00d1e" stroke-width="0.9"/></svg>
<div class="t" style="left:1011.2px;top:85.59px;font-size:13.3px;line-height:1;color:#c00d1e;font-weight:normal;letter-spacing:0px;">Katrina Wallin</div>
<div class="t" style="left:1225px;top:85.59px;font-size:13.3px;line-height:1;color:#1f1f1f;font-weight:normal;letter-spacing:0px;">C2023MD</div>
<div class="t" style="left:1434px;top:85.85px;font-size:13.7px;line-height:1;color:#1f1f1f;font-weight:normal;letter-spacing:0px;">katrina.wallin@identitystream.com</div>
<div class="t" style="left:1740px;top:86.02px;font-size:13.5px;line-height:1;color:#1f1f1f;font-weight:normal;letter-spacing:0px;">SpareBank 1 Sør-Norge</div>
<div class="t" style="left:1962px;top:86.02px;font-size:13.5px;line-height:1;color:#1f1f1f;font-weight:normal;letter-spacing:0px;">IT Drift</div>
<div class="t" style="left:2192.3px;top:85.59px;font-size:13.3px;line-height:1;color:#1f1f1f;font-weight:normal;letter-spacing:0px;">10790</div>
<div class="a" style="left:0;top:111px;width:2243px;height:36px;background:#f2f2f2"></div>
<div class="a" style="left:0;top:147px;width:2243px;height:1px;background:#dcdcdc"></div>
<svg class="a" style="left:12px;top:122px" width="16" height="16" viewBox="0 0 16 16"><path d="M7.3 1.9 H3.2 Q1.9 1.9 1.9 3.2 V12.8 Q1.9 14.1 3.2 14.1 H12.8 Q14.1 14.1 14.1 12.8 V8.3" fill="none" stroke="#c8102e" stroke-width="1.75"/><path d="M9.2 1.1 H14.9 V6.8 Z" fill="#c8102e"/><line x1="5.2" y1="10.8" x2="13.2" y2="2.8" stroke="#c8102e" stroke-width="1.75"/></svg>
<div class="t" style="left:37px;top:123.96px;font-size:13.1px;line-height:1;color:#c00d1e;font-weight:normal;letter-spacing:-0.2px;-webkit-text-stroke:0.35px #c00d1e;transform:scaleX(0.94);transform-origin:0 0">CALL691553</div>
<div class="t" style="left:163px;top:122.59px;font-size:13.3px;line-height:1;color:#1f1f1f;font-weight:normal;letter-spacing:0px;">Åpen</div>
<svg class="a" style="left:288px;top:120px" width="24" height="16" viewBox="0 0 24 16"><g fill="#1b1e21"><circle cx="8" cy="4.8" r="4"/><path d="M0 15 Q0 9.4 8 9.4 Q16 9.4 16 15 Z"/><rect x="15" y="6.8" width="6" height="2"/></g></svg>
<div class="t" style="left:314px;top:122.93px;font-size:13.85px;line-height:1;color:#1f1f1f;font-weight:normal;letter-spacing:0px;">Ansvar for sluttført bruker: Jan Martin Kristiansen</div>
<div class="t" style="left:844px;top:122.59px;font-size:13.3px;line-height:1;color:#1f1f1f;font-weight:normal;letter-spacing:0px;">01.01.2026</div>
<svg class="a" style="left:987px;top:120.29999999999995px" width="22" height="17" viewBox="0 0 22 17"><rect x="0" y="0.3" width="20.3" height="15.2" rx="2" fill="#c00d1e"/><circle cx="6.5" cy="5.5" r="2.5" fill="#fff"/><path d="M1.8 13.1 Q2.3 9.2 6.7 9.2 Q11.1 9.2 11.8 13.1 Z" fill="#fff"/><rect x="11.7" y="3" width="7" height="5" fill="#fff"/><polyline points="12.4,3.9 15.2,5.8 18,3.9" fill="none" stroke="#c00d1e" stroke-width="0.9"/></svg>
<div class="t" style="left:1011.2px;top:122.59px;font-size:13.3px;line-height:1;color:#c00d1e;font-weight:normal;letter-spacing:0px;">Jan Martin Kristiansen</div>
<div class="t" style="left:1225px;top:122.59px;font-size:13.3px;line-height:1;color:#1f1f1f;font-weight:normal;letter-spacing:0px;">C260816</div>
<div class="t" style="left:1740px;top:123.02px;font-size:13.5px;line-height:1;color:#1f1f1f;font-weight:normal;letter-spacing:0px;">SpareBank 1 SR-Bank</div>
<div class="a" style="left:0;top:148px;width:2243px;height:36px;background:#ffffff"></div>
<div class="a" style="left:0;top:184px;width:2243px;height:1px;background:#dcdcdc"></div>
<svg class="a" style="left:12px;top:159px" width="16" height="16" viewBox="0 0 16 16"><path d="M7.3 1.9 H3.2 Q1.9 1.9 1.9 3.2 V12.8 Q1.9 14.1 3.2 14.1 H12.8 Q14.1 14.1 14.1 12.8 V8.3" fill="none" stroke="#c8102e" stroke-width="1.75"/><path d="M9.2 1.1 H14.9 V6.8 Z" fill="#c8102e"/><line x1="5.2" y1="10.8" x2="13.2" y2="2.8" stroke="#c8102e" stroke-width="1.75"/></svg>
<div class="t" style="left:37px;top:160.96px;font-size:13.1px;line-height:1;color:#c00d1e;font-weight:normal;letter-spacing:-0.2px;-webkit-text-stroke:0.35px #c00d1e;transform:scaleX(0.94);transform-origin:0 0">CALL691548</div>
<div class="t" style="left:163px;top:159.59px;font-size:13.3px;line-height:1;color:#1f1f1f;font-weight:normal;letter-spacing:0px;">Åpen</div>
<svg class="a" style="left:288px;top:157px" width="24" height="16" viewBox="0 0 24 16"><g fill="#1b1e21"><circle cx="8" cy="4.8" r="4"/><path d="M0 15 Q0 9.4 8 9.4 Q16 9.4 16 15 Z"/><rect x="15" y="6.8" width="6" height="2"/></g></svg>
<div class="t" style="left:314px;top:159.93px;font-size:13.85px;line-height:1;color:#1f1f1f;font-weight:normal;letter-spacing:0px;">Ansvar for sluttført bruker: Ingolf Klokk</div>
<div class="t" style="left:844px;top:159.59px;font-size:13.3px;line-height:1;color:#1f1f1f;font-weight:normal;letter-spacing:0px;">01.01.2026</div>
<svg class="a" style="left:987px;top:157.29999999999995px" width="22" height="17" viewBox="0 0 22 17"><rect x="0" y="0.3" width="20.3" height="15.2" rx="2" fill="#c00d1e"/><circle cx="6.5" cy="5.5" r="2.5" fill="#fff"/><path d="M1.8 13.1 Q2.3 9.2 6.7 9.2 Q11.1 9.2 11.8 13.1 Z" fill="#fff"/><rect x="11.7" y="3" width="7" height="5" fill="#fff"/><polyline points="12.4,3.9 15.2,5.8 18,3.9" fill="none" stroke="#c00d1e" stroke-width="0.9"/></svg>
<div class="t" style="left:1011.2px;top:159.59px;font-size:13.3px;line-height:1;color:#c00d1e;font-weight:normal;letter-spacing:0px;">Ingolf Klokk</div>
<div class="t" style="left:1225px;top:159.59px;font-size:13.3px;line-height:1;color:#1f1f1f;font-weight:normal;letter-spacing:0px;">C2023W3</div>
<div class="t" style="left:1740px;top:160.02px;font-size:13.5px;line-height:1;color:#1f1f1f;font-weight:normal;letter-spacing:0px;">SpareBank 1 Sør-Norge</div>
<div class="t" style="left:1962px;top:160.02px;font-size:13.5px;line-height:1;color:#1f1f1f;font-weight:normal;letter-spacing:0px;">IT Drift</div>
<div class="t" style="left:2192.3px;top:159.59px;font-size:13.3px;line-height:1;color:#1f1f1f;font-weight:normal;letter-spacing:0px;">10790</div>
<div class="a" style="left:0;top:185px;width:2243px;height:36px;background:#f2f2f2"></div>
<div class="a" style="left:0;top:221px;width:2243px;height:1px;background:#dcdcdc"></div>
<svg class="a" style="left:12px;top:196px" width="16" height="16" viewBox="0 0 16 16"><path d="M7.3 1.9 H3.2 Q1.9 1.9 1.9 3.2 V12.8 Q1.9 14.1 3.2 14.1 H12.8 Q14.1 14.1 14.1 12.8 V8.3" fill="none" stroke="#c8102e" stroke-width="1.75"/><path d="M9.2 1.1 H14.9 V6.8 Z" fill="#c8102e"/><line x1="5.2" y1="10.8" x2="13.2" y2="2.8" stroke="#c8102e" stroke-width="1.75"/></svg>
<div class="t" style="left:37px;top:197.96px;font-size:13.1px;line-height:1;color:#c00d1e;font-weight:normal;letter-spacing:-0.2px;-webkit-text-stroke:0.35px #c00d1e;transform:scaleX(0.94);transform-origin:0 0">CALL691513</div>
<div class="t" style="left:163px;top:196.59px;font-size:13.3px;line-height:1;color:#1f1f1f;font-weight:normal;letter-spacing:0px;">Åpen</div>
<svg class="a" style="left:288px;top:194px" width="24" height="16" viewBox="0 0 24 16"><g fill="#1b1e21"><circle cx="8" cy="4.8" r="4"/><path d="M0 15 Q0 9.4 8 9.4 Q16 9.4 16 15 Z"/><rect x="15" y="6.8" width="6" height="2"/></g></svg>
<div class="t" style="left:314px;top:196.93px;font-size:13.85px;line-height:1;color:#1f1f1f;font-weight:normal;letter-spacing:0px;">Ansvar for sluttført bruker: Ingunn Helgestad</div>
<div class="t" style="left:844px;top:196.59px;font-size:13.3px;line-height:1;color:#1f1f1f;font-weight:normal;letter-spacing:0px;">01.01.2026</div>
<svg class="a" style="left:987px;top:194.29999999999995px" width="22" height="17" viewBox="0 0 22 17"><rect x="0" y="0.3" width="20.3" height="15.2" rx="2" fill="#c00d1e"/><circle cx="6.5" cy="5.5" r="2.5" fill="#fff"/><path d="M1.8 13.1 Q2.3 9.2 6.7 9.2 Q11.1 9.2 11.8 13.1 Z" fill="#fff"/><rect x="11.7" y="3" width="7" height="5" fill="#fff"/><polyline points="12.4,3.9 15.2,5.8 18,3.9" fill="none" stroke="#c00d1e" stroke-width="0.9"/></svg>
<div class="t" style="left:1011.2px;top:196.59px;font-size:13.3px;line-height:1;color:#c00d1e;font-weight:normal;letter-spacing:0px;">Ingunn Helgestad</div>
<div class="t" style="left:1225px;top:196.59px;font-size:13.3px;line-height:1;color:#1f1f1f;font-weight:normal;letter-spacing:0px;">C2023S3</div>
<div class="t" style="left:1740px;top:197.02px;font-size:13.5px;line-height:1;color:#1f1f1f;font-weight:normal;letter-spacing:0px;">SpareBank 1 Sør-Norge</div>
<div class="t" style="left:1962px;top:197.02px;font-size:13.5px;line-height:1;color:#1f1f1f;font-weight:normal;letter-spacing:0px;">Brukerstøttende tjenester</div>
<div class="t" style="left:2192.3px;top:196.59px;font-size:13.3px;line-height:1;color:#1f1f1f;font-weight:normal;letter-spacing:0px;">10790</div>
<div class="a" style="left:0;top:222px;width:2243px;height:36px;background:#ffffff"></div>
<div class="a" style="left:0;top:258px;width:2243px;height:1px;background:#dcdcdc"></div>
<svg class="a" style="left:12px;top:233px" width="16" height="16" viewBox="0 0 16 16"><path d="M7.3 1.9 H3.2 Q1.9 1.9 1.9 3.2 V12.8 Q1.9 14.1 3.2 14.1 H12.8 Q14.1 14.1 14.1 12.8 V8.3" fill="none" stroke="#c8102e" stroke-width="1.75"/><path d="M9.2 1.1 H14.9 V6.8 Z" fill="#c8102e"/><line x1="5.2" y1="10.8" x2="13.2" y2="2.8" stroke="#c8102e" stroke-width="1.75"/></svg>
<div class="t" style="left:37px;top:234.96px;font-size:13.1px;line-height:1;color:#c00d1e;font-weight:normal;letter-spacing:-0.2px;-webkit-text-stroke:0.35px #c00d1e;transform:scaleX(0.94);transform-origin:0 0">CALL691493</div>
<div class="t" style="left:163px;top:233.59px;font-size:13.3px;line-height:1;color:#1f1f1f;font-weight:normal;letter-spacing:0px;">Åpen</div>
<svg class="a" style="left:288px;top:231px" width="24" height="16" viewBox="0 0 24 16"><g fill="#1b1e21"><circle cx="8" cy="4.8" r="4"/><path d="M0 15 Q0 9.4 8 9.4 Q16 9.4 16 15 Z"/><rect x="15" y="6.8" width="6" height="2"/></g></svg>
<div class="t" style="left:314px;top:233.93px;font-size:13.85px;line-height:1;color:#1f1f1f;font-weight:normal;letter-spacing:0px;">Ansvar for sluttført bruker: Eilert Østgård</div>
<div class="t" style="left:844px;top:233.59px;font-size:13.3px;line-height:1;color:#1f1f1f;font-weight:normal;letter-spacing:0px;">01.01.2026</div>
<svg class="a" style="left:987px;top:231.29999999999995px" width="22" height="17" viewBox="0 0 22 17"><rect x="0" y="0.3" width="20.3" height="15.2" rx="2" fill="#c00d1e"/><circle cx="6.5" cy="5.5" r="2.5" fill="#fff"/><path d="M1.8 13.1 Q2.3 9.2 6.7 9.2 Q11.1 9.2 11.8 13.1 Z" fill="#fff"/><rect x="11.7" y="3" width="7" height="5" fill="#fff"/><polyline points="12.4,3.9 15.2,5.8 18,3.9" fill="none" stroke="#c00d1e" stroke-width="0.9"/></svg>
<div class="t" style="left:1011.2px;top:233.59px;font-size:13.3px;line-height:1;color:#c00d1e;font-weight:normal;letter-spacing:0px;">Eilert Østgård</div>
<div class="t" style="left:1225px;top:233.59px;font-size:13.3px;line-height:1;color:#1f1f1f;font-weight:normal;letter-spacing:0px;">C2023SR</div>
<div class="t" style="left:1740px;top:234.02px;font-size:13.5px;line-height:1;color:#1f1f1f;font-weight:normal;letter-spacing:0px;">SpareBank 1 Sør-Norge</div>
<div class="t" style="left:1962px;top:234.02px;font-size:13.5px;line-height:1;color:#1f1f1f;font-weight:normal;letter-spacing:0px;">Brukerstøttende tjenester</div>
<div class="t" style="left:2192.3px;top:233.59px;font-size:13.3px;line-height:1;color:#1f1f1f;font-weight:normal;letter-spacing:0px;">10790</div>
<div class="a" style="left:0;top:259px;width:2243px;height:36px;background:#f2f2f2"></div>
<div class="a" style="left:0;top:295px;width:2243px;height:1px;background:#dcdcdc"></div>
<svg class="a" style="left:12px;top:270px" width="16" height="16" viewBox="0 0 16 16"><path d="M7.3 1.9 H3.2 Q1.9 1.9 1.9 3.2 V12.8 Q1.9 14.1 3.2 14.1 H12.8 Q14.1 14.1 14.1 12.8 V8.3" fill="none" stroke="#c8102e" stroke-width="1.75"/><path d="M9.2 1.1 H14.9 V6.8 Z" fill="#c8102e"/><line x1="5.2" y1="10.8" x2="13.2" y2="2.8" stroke="#c8102e" stroke-width="1.75"/></svg>
<div class="t" style="left:37px;top:271.96px;font-size:13.1px;line-height:1;color:#c00d1e;font-weight:normal;letter-spacing:-0.2px;-webkit-text-stroke:0.35px #c00d1e;transform:scaleX(0.94);transform-origin:0 0">CALL691461</div>
<div class="t" style="left:163px;top:270.59px;font-size:13.3px;line-height:1;color:#1f1f1f;font-weight:normal;letter-spacing:0px;">Åpen</div>
<svg class="a" style="left:288px;top:268px" width="24" height="16" viewBox="0 0 24 16"><g fill="#1b1e21"><circle cx="8" cy="4.8" r="4"/><path d="M0 15 Q0 9.4 8 9.4 Q16 9.4 16 15 Z"/><rect x="15" y="6.8" width="6" height="2"/></g></svg>
<div class="t" style="left:314px;top:270.93px;font-size:13.85px;line-height:1;color:#1f1f1f;font-weight:normal;letter-spacing:0px;">Ansvar for sluttført bruker: Bodil Zahl</div>
<div class="t" style="left:844px;top:270.59px;font-size:13.3px;line-height:1;color:#1f1f1f;font-weight:normal;letter-spacing:0px;">01.01.2026</div>
<svg class="a" style="left:987px;top:268.29999999999995px" width="22" height="17" viewBox="0 0 22 17"><rect x="0" y="0.3" width="20.3" height="15.2" rx="2" fill="#c00d1e"/><circle cx="6.5" cy="5.5" r="2.5" fill="#fff"/><path d="M1.8 13.1 Q2.3 9.2 6.7 9.2 Q11.1 9.2 11.8 13.1 Z" fill="#fff"/><rect x="11.7" y="3" width="7" height="5" fill="#fff"/><polyline points="12.4,3.9 15.2,5.8 18,3.9" fill="none" stroke="#c00d1e" stroke-width="0.9"/></svg>
<div class="t" style="left:1011.2px;top:270.59px;font-size:13.3px;line-height:1;color:#c00d1e;font-weight:normal;letter-spacing:0px;">Bodil Zahl</div>
<div class="t" style="left:1225px;top:270.59px;font-size:13.3px;line-height:1;color:#1f1f1f;font-weight:normal;letter-spacing:0px;">C2023SN</div>
<div class="t" style="left:1740px;top:271.02px;font-size:13.5px;line-height:1;color:#1f1f1f;font-weight:normal;letter-spacing:0px;">SpareBank 1 Sør-Norge</div>
<div class="t" style="left:1962px;top:271.02px;font-size:13.5px;line-height:1;color:#1f1f1f;font-weight:normal;letter-spacing:0px;">Brukerstøttende tjenester</div>
<div class="t" style="left:2192.3px;top:270.59px;font-size:13.3px;line-height:1;color:#1f1f1f;font-weight:normal;letter-spacing:0px;">10790</div>
<div class="a" style="left:0;top:296px;width:2243px;height:36px;background:#ffffff"></div>
<div class="a" style="left:0;top:332px;width:2243px;height:1px;background:#dcdcdc"></div>
<svg class="a" style="left:12px;top:307px" width="16" height="16" viewBox="0 0 16 16"><path d="M7.3 1.9 H3.2 Q1.9 1.9 1.9 3.2 V12.8 Q1.9 14.1 3.2 14.1 H12.8 Q14.1 14.1 14.1 12.8 V8.3" fill="none" stroke="#c8102e" stroke-width="1.75"/><path d="M9.2 1.1 H14.9 V6.8 Z" fill="#c8102e"/><line x1="5.2" y1="10.8" x2="13.2" y2="2.8" stroke="#c8102e" stroke-width="1.75"/></svg>
<div class="t" style="left:37px;top:308.96px;font-size:13.1px;line-height:1;color:#c00d1e;font-weight:normal;letter-spacing:-0.2px;-webkit-text-stroke:0.35px #c00d1e;transform:scaleX(0.94);transform-origin:0 0">CALL691441</div>
<div class="t" style="left:163px;top:307.59px;font-size:13.3px;line-height:1;color:#1f1f1f;font-weight:normal;letter-spacing:0px;">Åpen</div>
<svg class="a" style="left:288px;top:305px" width="24" height="16" viewBox="0 0 24 16"><g fill="#1b1e21"><circle cx="8" cy="4.8" r="4"/><path d="M0 15 Q0 9.4 8 9.4 Q16 9.4 16 15 Z"/><rect x="15" y="6.8" width="6" height="2"/></g></svg>
<div class="t" style="left:314px;top:307.93px;font-size:13.85px;line-height:1;color:#1f1f1f;font-weight:normal;letter-spacing:0px;">Ansvar for sluttført bruker: Laurits Kolle</div>
<div class="t" style="left:844px;top:307.59px;font-size:13.3px;line-height:1;color:#1f1f1f;font-weight:normal;letter-spacing:0px;">01.01.2026</div>
<svg class="a" style="left:987px;top:305.29999999999995px" width="22" height="17" viewBox="0 0 22 17"><rect x="0" y="0.3" width="20.3" height="15.2" rx="2" fill="#c00d1e"/><circle cx="6.5" cy="5.5" r="2.5" fill="#fff"/><path d="M1.8 13.1 Q2.3 9.2 6.7 9.2 Q11.1 9.2 11.8 13.1 Z" fill="#fff"/><rect x="11.7" y="3" width="7" height="5" fill="#fff"/><polyline points="12.4,3.9 15.2,5.8 18,3.9" fill="none" stroke="#c00d1e" stroke-width="0.9"/></svg>
<div class="t" style="left:1011.2px;top:307.59px;font-size:13.3px;line-height:1;color:#c00d1e;font-weight:normal;letter-spacing:0px;">Laurits Kolle</div>
<div class="t" style="left:1225px;top:307.59px;font-size:13.3px;line-height:1;color:#1f1f1f;font-weight:normal;letter-spacing:0px;">C2023S4</div>
<div class="t" style="left:1740px;top:308.02px;font-size:13.5px;line-height:1;color:#1f1f1f;font-weight:normal;letter-spacing:0px;">SpareBank 1 SR-Bank</div>
<div class="t" style="left:1962px;top:308.02px;font-size:13.5px;line-height:1;color:#1f1f1f;font-weight:normal;letter-spacing:0px;">IT Drift</div>
<div class="t" style="left:2192.3px;top:307.59px;font-size:13.3px;line-height:1;color:#1f1f1f;font-weight:normal;letter-spacing:0px;">10790</div>
<div class="a" style="left:0;top:333px;width:2243px;height:36px;background:#f2f2f2"></div>
<div class="a" style="left:0;top:369px;width:2243px;height:1px;background:#dcdcdc"></div>
<svg class="a" style="left:12px;top:344px" width="16" height="16" viewBox="0 0 16 16"><path d="M7.3 1.9 H3.2 Q1.9 1.9 1.9 3.2 V12.8 Q1.9 14.1 3.2 14.1 H12.8 Q14.1 14.1 14.1 12.8 V8.3" fill="none" stroke="#c8102e" stroke-width="1.75"/><path d="M9.2 1.1 H14.9 V6.8 Z" fill="#c8102e"/><line x1="5.2" y1="10.8" x2="13.2" y2="2.8" stroke="#c8102e" stroke-width="1.75"/></svg>
<div class="t" style="left:37px;top:345.96px;font-size:13.1px;line-height:1;color:#c00d1e;font-weight:normal;letter-spacing:-0.2px;-webkit-text-stroke:0.35px #c00d1e;transform:scaleX(0.94);transform-origin:0 0">CALL691409</div>
<div class="t" style="left:163px;top:344.59px;font-size:13.3px;line-height:1;color:#1f1f1f;font-weight:normal;letter-spacing:0px;">Åpen</div>
<svg class="a" style="left:288px;top:342px" width="24" height="16" viewBox="0 0 24 16"><g fill="#1b1e21"><circle cx="8" cy="4.8" r="4"/><path d="M0 15 Q0 9.4 8 9.4 Q16 9.4 16 15 Z"/><rect x="15" y="6.8" width="6" height="2"/></g></svg>
<div class="t" style="left:314px;top:344.93px;font-size:13.85px;line-height:1;color:#1f1f1f;font-weight:normal;letter-spacing:0px;">Ansvar for sluttført bruker: Przemyslaw Synnes</div>
<div class="t" style="left:844px;top:344.59px;font-size:13.3px;line-height:1;color:#1f1f1f;font-weight:normal;letter-spacing:0px;">01.01.2026</div>
<svg class="a" style="left:987px;top:342.29999999999995px" width="22" height="17" viewBox="0 0 22 17"><rect x="0" y="0.3" width="20.3" height="15.2" rx="2" fill="#c00d1e"/><circle cx="6.5" cy="5.5" r="2.5" fill="#fff"/><path d="M1.8 13.1 Q2.3 9.2 6.7 9.2 Q11.1 9.2 11.8 13.1 Z" fill="#fff"/><rect x="11.7" y="3" width="7" height="5" fill="#fff"/><polyline points="12.4,3.9 15.2,5.8 18,3.9" fill="none" stroke="#c00d1e" stroke-width="0.9"/></svg>
<div class="t" style="left:1011.2px;top:344.59px;font-size:13.3px;line-height:1;color:#c00d1e;font-weight:normal;letter-spacing:0px;">Przemyslaw Synnes</div>
<div class="t" style="left:1225px;top:344.59px;font-size:13.3px;line-height:1;color:#1f1f1f;font-weight:normal;letter-spacing:0px;">C2023S9</div>
<div class="t" style="left:1740px;top:345.02px;font-size:13.5px;line-height:1;color:#1f1f1f;font-weight:normal;letter-spacing:0px;">SpareBank 1 Sør-Norge</div>
<div class="t" style="left:1962px;top:345.02px;font-size:13.5px;line-height:1;color:#1f1f1f;font-weight:normal;letter-spacing:0px;">Brukerstøttende tjenester</div>
<div class="t" style="left:2192.3px;top:344.59px;font-size:13.3px;line-height:1;color:#1f1f1f;font-weight:normal;letter-spacing:0px;">10790</div>
<div class="a" style="left:0;top:370px;width:2243px;height:36px;background:#ffffff"></div>
<div class="a" style="left:0;top:406px;width:2243px;height:1px;background:#dcdcdc"></div>
<svg class="a" style="left:12px;top:381px" width="16" height="16" viewBox="0 0 16 16"><path d="M7.3 1.9 H3.2 Q1.9 1.9 1.9 3.2 V12.8 Q1.9 14.1 3.2 14.1 H12.8 Q14.1 14.1 14.1 12.8 V8.3" fill="none" stroke="#c8102e" stroke-width="1.75"/><path d="M9.2 1.1 H14.9 V6.8 Z" fill="#c8102e"/><line x1="5.2" y1="10.8" x2="13.2" y2="2.8" stroke="#c8102e" stroke-width="1.75"/></svg>
<div class="t" style="left:37px;top:382.96px;font-size:13.1px;line-height:1;color:#c00d1e;font-weight:normal;letter-spacing:-0.2px;-webkit-text-stroke:0.35px #c00d1e;transform:scaleX(0.94);transform-origin:0 0">CALL691359</div>
<div class="t" style="left:163px;top:381.59px;font-size:13.3px;line-height:1;color:#1f1f1f;font-weight:normal;letter-spacing:0px;">Åpen</div>
<svg class="a" style="left:288px;top:379px" width="24" height="16" viewBox="0 0 24 16"><g fill="#1b1e21"><circle cx="8" cy="4.8" r="4"/><path d="M0 15 Q0 9.4 8 9.4 Q16 9.4 16 15 Z"/><rect x="15" y="6.8" width="6" height="2"/></g></svg>
<div class="t" style="left:314px;top:381.93px;font-size:13.85px;line-height:1;color:#1f1f1f;font-weight:normal;letter-spacing:0px;">Ansvar for sluttført bruker: Haldor Mork</div>
<div class="t" style="left:844px;top:381.59px;font-size:13.3px;line-height:1;color:#1f1f1f;font-weight:normal;letter-spacing:0px;">01.01.2026</div>
<svg class="a" style="left:987px;top:379.29999999999995px" width="22" height="17" viewBox="0 0 22 17"><rect x="0" y="0.3" width="20.3" height="15.2" rx="2" fill="#c00d1e"/><circle cx="6.5" cy="5.5" r="2.5" fill="#fff"/><path d="M1.8 13.1 Q2.3 9.2 6.7 9.2 Q11.1 9.2 11.8 13.1 Z" fill="#fff"/><rect x="11.7" y="3" width="7" height="5" fill="#fff"/><polyline points="12.4,3.9 15.2,5.8 18,3.9" fill="none" stroke="#c00d1e" stroke-width="0.9"/></svg>
<div class="t" style="left:1011.2px;top:381.59px;font-size:13.3px;line-height:1;color:#c00d1e;font-weight:normal;letter-spacing:0px;">Haldor Mork</div>
<div class="t" style="left:1225px;top:381.59px;font-size:13.3px;line-height:1;color:#1f1f1f;font-weight:normal;letter-spacing:0px;">C2023ST</div>
<div class="t" style="left:1740px;top:382.02px;font-size:13.5px;line-height:1;color:#1f1f1f;font-weight:normal;letter-spacing:0px;">SpareBank 1 Sør-Norge</div>
<div class="t" style="left:1962px;top:382.02px;font-size:13.5px;line-height:1;color:#1f1f1f;font-weight:normal;letter-spacing:0px;">IT Drift</div>
<div class="t" style="left:2192.3px;top:381.59px;font-size:13.3px;line-height:1;color:#1f1f1f;font-weight:normal;letter-spacing:0px;">10790</div>
<div class="a" style="left:0;top:407px;width:2243px;height:36px;background:#f2f2f2"></div>
<div class="a" style="left:0;top:443px;width:2243px;height:1px;background:#dcdcdc"></div>
<svg class="a" style="left:12px;top:418px" width="16" height="16" viewBox="0 0 16 16"><path d="M7.3 1.9 H3.2 Q1.9 1.9 1.9 3.2 V12.8 Q1.9 14.1 3.2 14.1 H12.8 Q14.1 14.1 14.1 12.8 V8.3" fill="none" stroke="#c8102e" stroke-width="1.75"/><path d="M9.2 1.1 H14.9 V6.8 Z" fill="#c8102e"/><line x1="5.2" y1="10.8" x2="13.2" y2="2.8" stroke="#c8102e" stroke-width="1.75"/></svg>
<div class="t" style="left:37px;top:419.96px;font-size:13.1px;line-height:1;color:#c00d1e;font-weight:normal;letter-spacing:-0.2px;-webkit-text-stroke:0.35px #c00d1e;transform:scaleX(0.94);transform-origin:0 0">CALL691344</div>
<div class="t" style="left:163px;top:418.59px;font-size:13.3px;line-height:1;color:#1f1f1f;font-weight:normal;letter-spacing:0px;">Åpen</div>
<svg class="a" style="left:288px;top:416px" width="24" height="16" viewBox="0 0 24 16"><g fill="#1b1e21"><circle cx="8" cy="4.8" r="4"/><path d="M0 15 Q0 9.4 8 9.4 Q16 9.4 16 15 Z"/><rect x="15" y="6.8" width="6" height="2"/></g></svg>
<div class="t" style="left:314px;top:418.93px;font-size:13.85px;line-height:1;color:#1f1f1f;font-weight:normal;letter-spacing:0px;">Fjerning av tilgang ved oppstart av sluttføring: Haldor Mork (C2023ST)</div>
<div class="t" style="left:844px;top:418.59px;font-size:13.3px;line-height:1;color:#1f1f1f;font-weight:normal;letter-spacing:0px;">01.01.2026</div>
<svg class="a" style="left:987px;top:416.29999999999995px" width="22" height="17" viewBox="0 0 22 17"><rect x="0" y="0.3" width="20.3" height="15.2" rx="2" fill="#c00d1e"/><circle cx="6.5" cy="5.5" r="2.5" fill="#fff"/><path d="M1.8 13.1 Q2.3 9.2 6.7 9.2 Q11.1 9.2 11.8 13.1 Z" fill="#fff"/><rect x="11.7" y="3" width="7" height="5" fill="#fff"/><polyline points="12.4,3.9 15.2,5.8 18,3.9" fill="none" stroke="#c00d1e" stroke-width="0.9"/></svg>
<div class="t" style="left:1011.2px;top:418.59px;font-size:13.3px;line-height:1;color:#c00d1e;font-weight:normal;letter-spacing:0px;">Haldor Mork</div>
<div class="t" style="left:1225px;top:418.59px;font-size:13.3px;line-height:1;color:#1f1f1f;font-weight:normal;letter-spacing:0px;">C2023ST</div>
<div class="t" style="left:1740px;top:419.02px;font-size:13.5px;line-height:1;color:#1f1f1f;font-weight:normal;letter-spacing:0px;">SpareBank 1 Sør-Norge</div>
<div class="t" style="left:1962px;top:419.02px;font-size:13.5px;line-height:1;color:#1f1f1f;font-weight:normal;letter-spacing:0px;">IT Drift</div>
<div class="t" style="left:2192.3px;top:418.59px;font-size:13.3px;line-height:1;color:#1f1f1f;font-weight:normal;letter-spacing:0px;">10790</div>
<div class="a" style="left:0;top:444px;width:2243px;height:36px;background:#ffffff"></div>
<div class="a" style="left:0;top:480px;width:2243px;height:1px;background:#dcdcdc"></div>
<svg class="a" style="left:12px;top:455px" width="16" height="16" viewBox="0 0 16 16"><path d="M7.3 1.9 H3.2 Q1.9 1.9 1.9 3.2 V12.8 Q1.9 14.1 3.2 14.1 H12.8 Q14.1 14.1 14.1 12.8 V8.3" fill="none" stroke="#c8102e" stroke-width="1.75"/><path d="M9.2 1.1 H14.9 V6.8 Z" fill="#c8102e"/><line x1="5.2" y1="10.8" x2="13.2" y2="2.8" stroke="#c8102e" stroke-width="1.75"/></svg>
<div class="t" style="left:163px;top:455.59px;font-size:13.3px;line-height:1;color:#1f1f1f;font-weight:normal;letter-spacing:0px;">Åpen</div>
<svg class="a" style="left:288px;top:453px" width="24" height="16" viewBox="0 0 24 16"><g fill="#1b1e21"><circle cx="8" cy="4.8" r="4"/><path d="M0 15 Q0 9.4 8 9.4 Q16 9.4 16 15 Z"/><rect x="15" y="6.8" width="6" height="2"/></g></svg>
<svg class="a" style="left:987px;top:453.29999999999995px" width="22" height="17" viewBox="0 0 22 17"><rect x="0" y="0.3" width="20.3" height="15.2" rx="2" fill="#c00d1e"/><circle cx="6.5" cy="5.5" r="2.5" fill="#fff"/><path d="M1.8 13.1 Q2.3 9.2 6.7 9.2 Q11.1 9.2 11.8 13.1 Z" fill="#fff"/><rect x="11.7" y="3" width="7" height="5" fill="#fff"/><polyline points="12.4,3.9 15.2,5.8 18,3.9" fill="none" stroke="#c00d1e" stroke-width="0.9"/></svg>
</div>
<svg class="a" style="left:2252px;top:462px" width="15" height="457" viewBox="0 0 15 457"><path d="M3 11.8 L7.5 4.8 L12 11.8 Z" fill="#8c8c8c"/><rect x="3.6" y="17.4" width="7.9" height="22.4" rx="3.95" fill="#8c8c8c"/><path d="M3 446 L12 446 L7.5 452.8 Z" fill="#8c8c8c"/></svg>
<div class="a" style="left:9px;top:919px;width:2243px;height:15px;background:#f9f9f9"></div>
<svg class="a" style="left:9px;top:919px" width="2243" height="15" viewBox="0 0 2243 15"><path d="M4.3 7.5 L11.8 3 L11.8 12 Z" fill="#8c8c8c"/><rect x="18.5" y="3" width="1281" height="9" rx="4.5" fill="#8c8c8c"/><path d="M2238.5 7.5 L2231.3 3 L2231.3 12 Z" fill="#8c8c8c"/></svg>
<div class="a" style="left:9px;top:934px;width:2291px;height:1px;background:#dcdcdc"></div>
<div class="t" style="left:41.5px;top:948.25px;font-size:14px;line-height:1;color:#1a1a1a;font-weight:normal;letter-spacing:-0.4px;-webkit-text-stroke:0.35px #1a1a1a;">Rader: 241</div>
<svg class="a" style="left:2276px;top:438px" width="16" height="16" viewBox="0 0 16 16"><rect x="1.8" y="1.8" width="12.4" height="12.4" rx="1.6" fill="none" stroke="#2b2b2b" stroke-width="1.5"/><line x1="1.8" y1="6.2" x2="14.2" y2="6.2" stroke="#2b2b2b" stroke-width="1.5"/><line x1="6.2" y1="6.2" x2="6.2" y2="14.2" stroke="#2b2b2b" stroke-width="1.5"/></svg>
<div class="t" style="left:2277px;top:460px;font-size:13.6px;line-height:1;color:#2b2b2b;writing-mode:vertical-rl">Kolonner</div>
<svg class="a" style="left:2276px;top:556px" width="16" height="12" viewBox="0 0 16 12"><g fill="#2b2b2b"><rect x="1.3" y="2.15" width="12.9" height="1.5"/><rect x="4.3" y="6.15" width="7.6" height="1.5"/><rect x="6.3" y="10.15" width="3.6" height="1.5"/></g></svg>
<div class="t" style="left:2277px;top:578px;font-size:13.3px;line-height:1;color:#2b2b2b;writing-mode:vertical-rl">Filtre</div>

</body></html>
